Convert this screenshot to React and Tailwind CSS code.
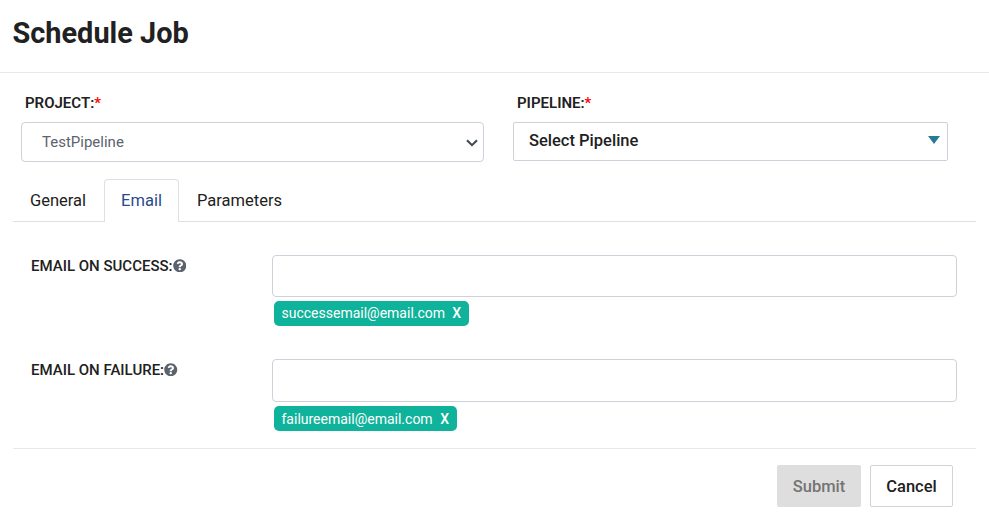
import React from "react";
import { FaQuestionCircle } from "react-icons/fa";

function FieldLabel({ children }) {
  return (
    <label className="ml-1 flex h-5 items-center text-[15px] font-semibold text-[#212121] whitespace-nowrap">
      {children}
      <span className="text-[#ff0000]">*</span>
    </label>
  );
}

function EmailTag({ email, className }) {
  return (
    <div className={`ml-0.5 mt-1 flex h-[25px] items-center justify-between rounded-[5px] bg-[#0fb29a] pl-[7.5px] pr-2 text-sm leading-none text-white whitespace-nowrap ${className}`}>
      <span>{email}</span>
      <button type="button" className="font-medium leading-none">X</button>
    </div>
  );
}

function EmailRow({ label, email, inputHeight, tagClass }) {
  return (
    <div className="flex">
      <div className="flex h-[22px] w-[241px] items-center text-[15px] font-medium text-[#212121] whitespace-nowrap">
        {label}
        <FaQuestionCircle className="mb-px size-[13.5px] text-[#5c636d]" />
      </div>
      <div className="w-[685px]">
        <input className={`block w-full rounded border border-[#ced0da] bg-white px-3 outline-none ${inputHeight}`} />
        <EmailTag email={email} className={tagClass} />
      </div>
    </div>
  );
}

export default function App() {
  return (
    <main className="h-[520px] w-[989px] overflow-hidden bg-white font-[Roboto,sans-serif] text-[#212121]">
      <header className="flex h-[73px] items-start border-b border-[#e7e8ea] pl-[12.5px] pt-[13px]">
        <h1 className="text-[28.9px] font-bold leading-10">Schedule Job</h1>
      </header>

      <section className="flex gap-[29px] pl-[21px] pt-5">
        <div className="w-[463px]">
          <FieldLabel>PROJECT:</FieldLabel>
          <div className="mt-[9px] flex h-10 items-center justify-between rounded border border-[#ced0da] pl-5 pr-[5px] text-[15px] text-[#5c636d]">
            <span>TestPipeline</span>
            <svg className="mt-0.5 h-2 w-3" viewBox="0 0 12 8" fill="none" stroke="#3f4650" strokeWidth="2">
              <path d="M1 1.2 6 6.2 11 1.2" />
            </svg>
          </div>
        </div>
        <div className="w-[435px]">
          <FieldLabel>PIPELINE:</FieldLabel>
          <div className="mt-[9px] flex h-[39px] items-center justify-between rounded-xs border border-[#ced0da] pl-[15px] pr-[7px] text-[16.5px] font-medium">
            <span className="pb-px leading-6">Select Pipeline</span>
            <svg className="mb-[3px] h-2 w-3" viewBox="0 0 12 8" fill="#277b96">
              <path d="M0 0H12L6 8Z" />
            </svg>
          </div>
        </div>
      </section>

      <nav className="ml-[13px] mt-[17px] flex h-[43px] w-[963px] text-[16.5px]">
        <button type="button" className="w-[91px] border-b border-[#dee0e4] pl-[17px] pt-0.5 text-left">General</button>
        <button type="button" className="w-[75px] rounded-t border border-b-0 border-[#dee0e4] text-[#274b8c]">Email</button>
        <button type="button" className="flex-1 border-b border-[#dee0e4] pl-[18px] pt-0.5 text-left">Parameters</button>
      </nav>

      <section className="ml-[31px] mt-[33px] flex h-[193px] flex-col gap-[33px]">
        <EmailRow label="EMAIL ON SUCCESS:" email="successemail@email.com" inputHeight="h-[42px]" tagClass="w-[195px] pb-px" />
        <EmailRow label="EMAIL ON FAILURE:" email="failureemail@email.com" inputHeight="h-[43px]" tagClass="w-[183px]" />
      </section>

      <footer className="mx-[13px] flex justify-end gap-[9px] border-t border-[#e7e8ea] pr-[23px] pt-4 text-[16.5px] font-medium">
        <button type="button" disabled className="h-[42px] w-[84px] rounded-xs bg-[#dedede] pt-0.5 text-[#747474]">Submit</button>
        <button type="button" className="h-[42px] w-[83px] rounded-xs border border-[#ced4da] bg-white pt-0.5">Cancel</button>
      </footer>
    </main>
  );
}
